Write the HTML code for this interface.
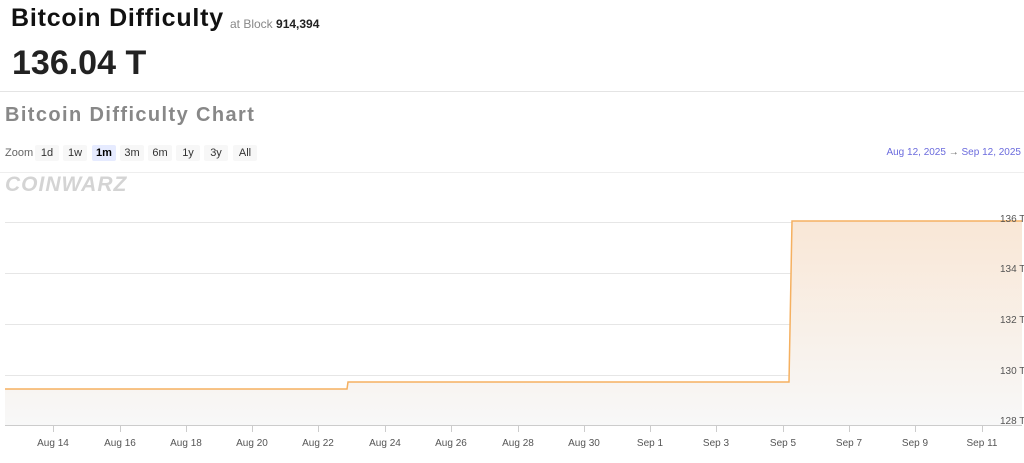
<!DOCTYPE html><html><head><style>
body{margin:0;width:1024px;height:463px;background:#fff;font-family:"Liberation Sans",sans-serif;position:relative;overflow:hidden}
.a{position:absolute;white-space:nowrap}
.b{position:absolute;top:145px;height:16px;background:#f7f7f7;font-size:11px;color:#333;text-align:center;line-height:16px;border-radius:2px}
</style></head><body>
<div class="a" style="left:11px;top:4px;font-size:25px;font-weight:bold;color:#111;letter-spacing:0.8px">Bitcoin Difficulty</div>
<div class="a" style="left:230px;top:17px;font-size:12px;color:#888">at Block <b style="color:#222">914,394</b></div>
<div class="a" style="left:12px;top:44px;font-size:34px;font-weight:bold;color:#222">136.04 T</div>
<div class="a" style="left:0;top:91px;width:1024px;height:1px;background:#e4e4e4"></div>
<div class="a" style="left:5px;top:104px;font-size:20px;font-weight:bold;color:#888;letter-spacing:1.4px">Bitcoin Difficulty Chart</div>
<div class="a" style="left:5px;top:147px;font-size:11px;color:#666">Zoom</div>
<div class="b" style="left:35px;width:24px">1d</div>
<div class="b" style="left:63px;width:24px">1w</div>
<div class="b" style="left:92px;width:24px;background:#e6ebff;font-weight:bold;color:#000">1m</div>
<div class="b" style="left:120px;width:24px">3m</div>
<div class="b" style="left:148px;width:24px">6m</div>
<div class="b" style="left:176px;width:24px">1y</div>
<div class="b" style="left:204px;width:24px">3y</div>
<div class="b" style="left:233px;width:24px">All</div>
<div class="a" style="right:3px;top:147px;font-size:10px;color:#6b6bdd">Aug 12, 2025 <span style="color:#666">→</span> Sep 12, 2025</div>
<div class="a" style="left:0;top:172px;width:1024px;height:1px;background:#eee"></div>
<div class="a" style="left:5px;top:173px;font-size:21px;font-weight:900;color:#d4d4d4;font-style:italic;letter-spacing:1px">COINWARZ</div>
<svg class="a" style="left:0;top:0" width="1024" height="463">
<defs><linearGradient id="g" x1="0" y1="0" x2="0" y2="1"><stop offset="0" stop-color="#f9e7d6"/><stop offset="1" stop-color="#f8f8f8"/></linearGradient></defs>
<g stroke="#e6e6e6" stroke-width="1">
<line x1="5" y1="222.5" x2="1022" y2="222.5"/><line x1="5" y1="273.5" x2="1022" y2="273.5"/><line x1="5" y1="324.5" x2="1022" y2="324.5"/><line x1="5" y1="375.5" x2="1022" y2="375.5"/>
</g>
<path d="M5 389 L347 389 L348 382 L789 382 L792 221 L1022 221 L1022 425 L5 425Z" fill="url(#g)"/>
<path d="M5 389 L347 389 L348 382 L789 382 L792 221 L1022 221" fill="none" stroke="#f5b060" stroke-width="1.5"/>
<line x1="5" y1="425.5" x2="1022" y2="425.5" stroke="#ccc"/>
<g stroke="#ccc">
<line x1="53.5" y1="426" x2="53.5" y2="432"/><line x1="120.5" y1="426" x2="120.5" y2="432"/><line x1="186.5" y1="426" x2="186.5" y2="432"/><line x1="252.5" y1="426" x2="252.5" y2="432"/><line x1="318.5" y1="426" x2="318.5" y2="432"/><line x1="385.5" y1="426" x2="385.5" y2="432"/><line x1="451.5" y1="426" x2="451.5" y2="432"/><line x1="518.5" y1="426" x2="518.5" y2="432"/><line x1="584.5" y1="426" x2="584.5" y2="432"/><line x1="650.5" y1="426" x2="650.5" y2="432"/><line x1="716.5" y1="426" x2="716.5" y2="432"/><line x1="783.5" y1="426" x2="783.5" y2="432"/><line x1="849.5" y1="426" x2="849.5" y2="432"/><line x1="915.5" y1="426" x2="915.5" y2="432"/><line x1="982.5" y1="426" x2="982.5" y2="432"/>
</g>
<g font-family="Liberation Sans, sans-serif" font-size="10" fill="#555" text-anchor="middle">
<text x="53" y="446">Aug 14</text><text x="120" y="446">Aug 16</text><text x="186" y="446">Aug 18</text><text x="252" y="446">Aug 20</text><text x="318" y="446">Aug 22</text><text x="385" y="446">Aug 24</text><text x="451" y="446">Aug 26</text><text x="518" y="446">Aug 28</text><text x="584" y="446">Aug 30</text><text x="650" y="446">Sep 1</text><text x="716" y="446">Sep 3</text><text x="783" y="446">Sep 5</text><text x="849" y="446">Sep 7</text><text x="915" y="446">Sep 9</text><text x="982" y="446">Sep 11</text>
</g>
<g font-family="Liberation Sans, sans-serif" font-size="10" fill="#555">
<text x="1000" y="222">136 T</text><text x="1000" y="272">134 T</text><text x="1000" y="323">132 T</text><text x="1000" y="374">130 T</text><text x="1000" y="424">128 T</text>
</g>
</svg>
</body></html>
